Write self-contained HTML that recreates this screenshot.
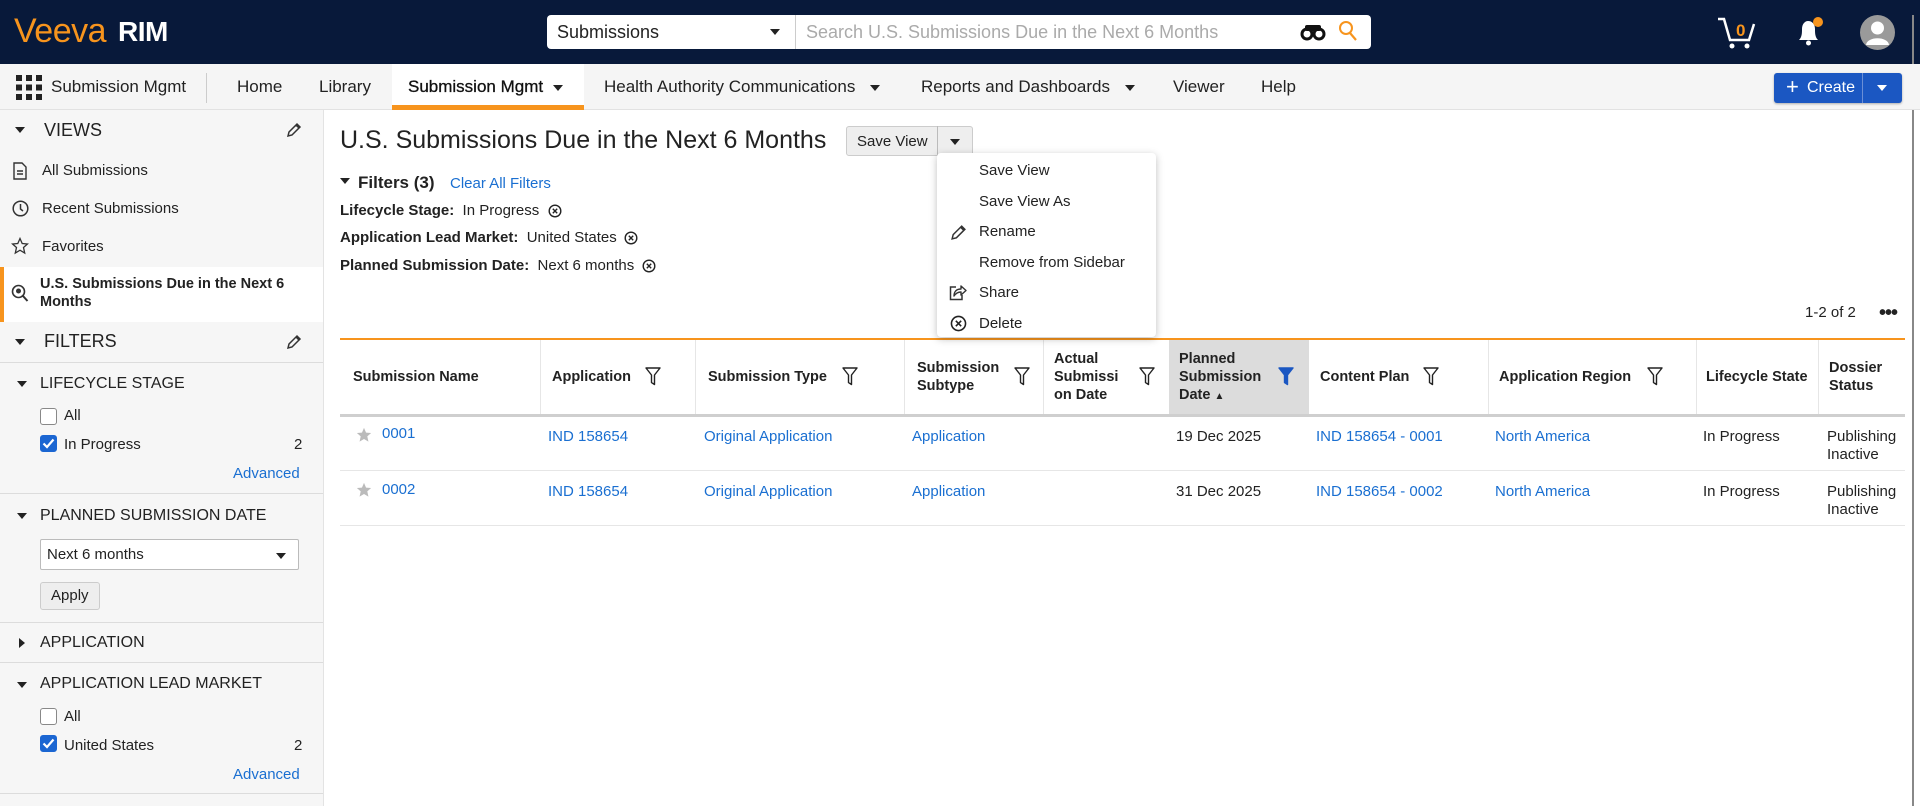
<!DOCTYPE html>
<html><head><meta charset="utf-8"><style>
*{box-sizing:border-box;margin:0;padding:0}
body{width:1920px;height:806px;overflow:hidden;font-family:"Liberation Sans",Arial,sans-serif;color:#222;background:#fff;position:relative}
.a{position:absolute;white-space:nowrap}
.top{position:absolute;left:0;top:0;width:1920px;height:64px;background:#08193a}
.nav{position:absolute;left:0;top:64px;width:1920px;height:46px;background:#f5f5f5;border-bottom:1px solid #e2e2e2}
.side{position:absolute;left:0;top:110px;width:324px;height:696px;background:#f6f6f6;border-right:1px solid #e3e3e3}
.blue{color:#1a6fd1}
.sb{font-size:15px}
.hr{position:absolute;left:0;width:323px;height:1px;background:#dcdcdc}
.cb{position:absolute;width:17px;height:17px;border:1px solid #888;border-radius:3px;background:#fff}
.cbon{background:#1b66d2;border-color:#1b66d2}
.caret{display:block;width:0;height:0;border-left:5px solid transparent;border-right:5px solid transparent;border-top:6px solid #222}
.th{position:absolute;font-size:14.5px;font-weight:bold;line-height:18px;color:#222}
.td{position:absolute;font-size:15px;line-height:18px}
.vd{position:absolute;top:340px;width:1px;height:74px;background:#e6e6e6}
</style></head><body>
<div class="top"></div>
<div class="a" style="left:14px;top:12px;font-size:34px;color:#f7941d;letter-spacing:-0.5px">Veeva</div>
<div class="a" style="left:118px;top:16px;font-size:28px;color:#fff;font-weight:bold;letter-spacing:-0.5px">RIM</div>
<div class="a" style="left:547px;top:15px;width:824px;height:34px;background:#fff;border-radius:4px"></div>
<div class="a" style="left:795px;top:15px;width:1px;height:34px;background:#ccc"></div>
<div class="a" style="left:557px;top:22px;font-size:18px;color:#222">Submissions</div>
<div class="a" style="left:770px;top:29px"><span class="caret"></span></div>
<div class="a" style="left:806px;top:22px;font-size:18px;color:#aaa">Search U.S. Submissions Due in the Next 6 Months</div>
<svg class="a" style="left:1300px;top:23px" width="26" height="18" viewBox="0 0 26 18"><circle cx="7" cy="11" r="5" fill="none" stroke="#111" stroke-width="3"/><circle cx="19" cy="11" r="5" fill="none" stroke="#111" stroke-width="3"/><rect x="5" y="2" width="16" height="6" rx="2" fill="#111"/></svg>
<svg class="a" style="left:1338px;top:20px" width="20" height="22" viewBox="0 0 20 22"><circle cx="8" cy="8" r="6" fill="none" stroke="#f7941d" stroke-width="2"/><line x1="12" y1="13" x2="18" y2="20" stroke="#f7941d" stroke-width="2.2"/></svg>
<svg class="a" style="left:1716px;top:16px" width="42" height="34" viewBox="0 0 42 34"><path d="M2 3 H8 L14 24 H33 L38 8" fill="none" stroke="#fff" stroke-width="2.5"/><circle cx="16" cy="30" r="2.5" fill="#fff"/><circle cx="31" cy="30" r="2.5" fill="#fff"/><text x="20" y="20" font-family="Liberation Sans" font-size="17" font-weight="bold" fill="#f7941d">0</text></svg>
<svg class="a" style="left:1794px;top:16px" width="32" height="32" viewBox="0 0 32 32"><path d="M5 24 C8 21 8 17 8 13 C8 8 11 5 14 5 C18 5 21 8 21 13 C21 17 21 21 24 24 Z" fill="#fff"/><circle cx="14.5" cy="27" r="2.5" fill="#fff"/><circle cx="24" cy="6" r="5" fill="#f7941d"/></svg>
<svg class="a" style="left:1860px;top:15px" width="35" height="35" viewBox="0 0 35 35"><circle cx="17.5" cy="17.5" r="17.5" fill="#9a9a9a"/><circle cx="17.5" cy="13" r="6.5" fill="#fff"/><path d="M6 30 C7 21 28 21 29 30 Z" fill="#fff"/></svg>
<div class="a" style="left:1912px;top:15px;width:2px;height:791px;background:#888"></div>

<div class="nav"></div>
<svg class="a" style="left:16px;top:75px" width="26" height="25" viewBox="0 0 26 25"><g fill="#222"><rect x="0" y="0" width="6" height="6"/><rect x="10" y="0" width="6" height="6"/><rect x="20" y="0" width="6" height="6"/><rect x="0" y="9.5" width="6" height="6"/><rect x="10" y="9.5" width="6" height="6"/><rect x="20" y="9.5" width="6" height="6"/><rect x="0" y="19" width="6" height="6"/><rect x="10" y="19" width="6" height="6"/><rect x="20" y="19" width="6" height="6"/></g></svg>
<div class="a" style="left:51px;top:77px;font-size:17px">Submission Mgmt</div>
<div class="a" style="left:206px;top:73px;width:1px;height:30px;background:#ccc"></div>
<div class="a" style="left:237px;top:77px;font-size:17px">Home</div>
<div class="a" style="left:319px;top:77px;font-size:17px">Library</div>
<div class="a" style="left:392px;top:64px;width:192px;height:46px;background:#fff;border-bottom:5px solid #f7941d"></div>
<div class="a" style="left:408px;top:77px;font-size:17px;color:#111;-webkit-text-stroke:0.3px #111">Submission Mgmt</div>
<div class="a" style="left:553px;top:85px"><span class="caret"></span></div>
<div class="a" style="left:604px;top:77px;font-size:17px">Health Authority Communications</div>
<div class="a" style="left:870px;top:85px"><span class="caret"></span></div>
<div class="a" style="left:921px;top:77px;font-size:17px">Reports and Dashboards</div>
<div class="a" style="left:1125px;top:85px"><span class="caret"></span></div>
<div class="a" style="left:1173px;top:77px;font-size:17px">Viewer</div>
<div class="a" style="left:1261px;top:77px;font-size:17px">Help</div>
<div class="a" style="left:1774px;top:73px;width:128px;height:30px;background:#1b57c2;border-radius:3px;box-shadow:0 1px 2px rgba(0,0,0,.3)"></div>
<div class="a" style="left:1862px;top:73px;width:1px;height:30px;background:#6b8fd6"></div>
<div class="a" style="left:1786px;top:75px;font-size:22px;color:#fff;line-height:24px">+</div>
<div class="a" style="left:1807px;top:79px;font-size:16px;color:#fff">Create</div>
<div class="a" style="left:1877px;top:85px"><span class="caret" style="border-top-color:#fff"></span></div>

<div class="side"></div>
<div class="a" style="left:15px;top:127px"><span class="caret"></span></div>
<div class="a" style="left:44px;top:120px;font-size:18px">VIEWS</div>
<svg class="a" style="left:286px;top:122px" width="16" height="16" viewBox="0 0 16 16"><path d="M2 14 L3 10 L11 2 L14 5 L6 13 Z M10 3 L13 6" fill="none" stroke="#333" stroke-width="1.5"/></svg>
<svg class="a" style="left:13px;top:162px" width="14" height="18" viewBox="0 0 14 18"><path d="M1 1 H9 L13 5 V17 H1 Z M4 9 H10 M4 12 H10" fill="none" stroke="#333" stroke-width="1.4"/></svg>
<div class="a sb" style="left:42px;top:162px">All Submissions</div>
<svg class="a" style="left:12px;top:200px" width="17" height="17" viewBox="0 0 17 17"><circle cx="8.5" cy="8.5" r="7.3" fill="none" stroke="#333" stroke-width="1.5"/><path d="M8.5 4 V9 L11 11" fill="none" stroke="#333" stroke-width="1.5"/></svg>
<div class="a sb" style="left:42px;top:200px">Recent Submissions</div>
<svg class="a" style="left:11px;top:237px" width="18" height="18" viewBox="0 0 18 18"><path d="M9 1.5 L11.2 6.5 L16.5 7 L12.5 10.5 L13.7 16 L9 13.2 L4.3 16 L5.5 10.5 L1.5 7 L6.8 6.5 Z" fill="none" stroke="#333" stroke-width="1.3"/></svg>
<div class="a sb" style="left:42px;top:238px">Favorites</div>
<div class="a" style="left:0;top:267px;width:323px;height:55px;background:#fff;border-left:4px solid #f7941d"></div>
<svg class="a" style="left:11px;top:284px" width="18" height="20" viewBox="0 0 18 20"><circle cx="7.5" cy="7.5" r="6" fill="none" stroke="#333" stroke-width="1.6"/><path d="M12 12 L16.5 17" stroke="#333" stroke-width="2"/><circle cx="7.5" cy="7" r="2.5" fill="#333"/></svg>
<div class="a" style="left:40px;top:275px;font-size:14.5px;font-weight:bold;line-height:18px">U.S. Submissions Due in the Next 6<br>Months</div>
<div class="a" style="left:15px;top:339px"><span class="caret"></span></div>
<div class="a" style="left:44px;top:331px;font-size:18px">FILTERS</div>
<svg class="a" style="left:286px;top:334px" width="16" height="16" viewBox="0 0 16 16"><path d="M2 14 L3 10 L11 2 L14 5 L6 13 Z M10 3 L13 6" fill="none" stroke="#333" stroke-width="1.5"/></svg>
<div class="hr" style="top:362px"></div>
<div class="a" style="left:17px;top:381px"><span class="caret"></span></div>
<div class="a" style="left:40px;top:375px;font-size:16px">LIFECYCLE STAGE</div>
<div class="cb" style="left:40px;top:408px"></div><div class="a sb" style="left:64px;top:407px">All</div>
<div class="cb cbon" style="left:40px;top:435px"></div>
<svg class="a" style="left:42px;top:438px" width="13" height="11" viewBox="0 0 13 11"><path d="M1.5 5.5 L5 9 L11.5 1.5" fill="none" stroke="#fff" stroke-width="2.2"/></svg>
<div class="a sb" style="left:64px;top:436px">In Progress</div><div class="a sb" style="left:294px;top:436px">2</div>
<div class="a sb blue" style="left:233px;top:465px">Advanced</div>
<div class="hr" style="top:493px"></div>
<div class="a" style="left:17px;top:513px"><span class="caret"></span></div>
<div class="a" style="left:40px;top:507px;font-size:16px">PLANNED SUBMISSION DATE</div>
<div class="a" style="left:40px;top:539px;width:259px;height:31px;background:#fff;border:1px solid #bbb;border-radius:2px"></div>
<div class="a sb" style="left:47px;top:546px">Next 6 months</div>
<div class="a" style="left:276px;top:553px"><span class="caret"></span></div>
<div class="a" style="left:40px;top:582px;width:60px;height:28px;background:#eee;border:1px solid #ccc;border-radius:3px"></div>
<div class="a sb" style="left:51px;top:587px">Apply</div>
<div class="hr" style="top:622px"></div>
<div class="a" style="left:19px;top:638px;width:0;height:0;border-top:5px solid transparent;border-bottom:5px solid transparent;border-left:6px solid #222"></div>
<div class="a" style="left:40px;top:634px;font-size:16px">APPLICATION</div>
<div class="hr" style="top:662px"></div>
<div class="a" style="left:17px;top:682px"><span class="caret"></span></div>
<div class="a" style="left:40px;top:675px;font-size:16px">APPLICATION LEAD MARKET</div>
<div class="cb" style="left:40px;top:708px"></div><div class="a sb" style="left:64px;top:708px">All</div>
<div class="cb cbon" style="left:40px;top:735px"></div>
<svg class="a" style="left:42px;top:738px" width="13" height="11" viewBox="0 0 13 11"><path d="M1.5 5.5 L5 9 L11.5 1.5" fill="none" stroke="#fff" stroke-width="2.2"/></svg>
<div class="a sb" style="left:64px;top:737px">United States</div><div class="a sb" style="left:294px;top:737px">2</div>
<div class="a sb blue" style="left:233px;top:766px">Advanced</div>
<div class="hr" style="top:793px"></div>

<div class="a" style="left:340px;top:126px;font-size:25px;color:#222">U.S. Submissions Due in the Next 6 Months</div>
<div class="a" style="left:846px;top:126px;width:127px;height:30px;background:#eee;border:1px solid #ccc;border-radius:3px"></div>
<div class="a" style="left:937px;top:126px;width:1px;height:30px;background:#bbb"></div>
<div class="a sb" style="left:857px;top:133px">Save View</div>
<div class="a" style="left:950px;top:139px"><span class="caret"></span></div>

<div class="a" style="left:340px;top:178px;width:0;height:0;border-left:5px solid transparent;border-right:5px solid transparent;border-top:6px solid #222"></div>
<div class="a" style="left:358px;top:173px;font-size:17px;font-weight:bold">Filters (3)</div>
<div class="a sb blue" style="left:450px;top:175px">Clear All Filters</div>
<div class="a sb" style="left:340px;top:202px"><b>Lifecycle Stage:</b>&nbsp; In Progress</div>
<div class="a sb" style="left:340px;top:229px"><b>Application Lead Market:</b>&nbsp; United States</div>
<div class="a sb" style="left:340px;top:257px"><b>Planned Submission Date:</b>&nbsp; Next 6 months</div>
<svg class="a" style="left:548px;top:204px" width="14" height="14" viewBox="0 0 14 14"><circle cx="7" cy="7" r="5.8" fill="none" stroke="#222" stroke-width="1.4"/><path d="M4.8 4.8 L9.2 9.2 M9.2 4.8 L4.8 9.2" stroke="#222" stroke-width="1.4"/></svg>
<svg class="a" style="left:624px;top:231px" width="14" height="14" viewBox="0 0 14 14"><circle cx="7" cy="7" r="5.8" fill="none" stroke="#222" stroke-width="1.4"/><path d="M4.8 4.8 L9.2 9.2 M9.2 4.8 L4.8 9.2" stroke="#222" stroke-width="1.4"/></svg>
<svg class="a" style="left:642px;top:259px" width="14" height="14" viewBox="0 0 14 14"><circle cx="7" cy="7" r="5.8" fill="none" stroke="#222" stroke-width="1.4"/><path d="M4.8 4.8 L9.2 9.2 M9.2 4.8 L4.8 9.2" stroke="#222" stroke-width="1.4"/></svg>

<div class="a sb" style="left:1805px;top:304px">1-2 of 2</div>
<div class="a" style="left:1879px;top:309px;font-size:20px;line-height:8px;font-weight:bold;letter-spacing:-1px">•••</div>

<div class="a" style="left:340px;top:338px;width:1565px;height:2px;background:#f7941d"></div>
<div class="a" style="left:1169px;top:340px;width:140px;height:74px;background:#dcdcdc"></div>
<div class="a" style="left:340px;top:414px;width:1565px;height:3px;background:#cfcfcf"></div>
<div class="vd" style="left:540px"></div><div class="vd" style="left:695px"></div><div class="vd" style="left:904px"></div><div class="vd" style="left:1043px"></div><div class="vd" style="left:1488px"></div><div class="vd" style="left:1696px"></div><div class="vd" style="left:1818px"></div>
<div class="th" style="left:353px;top:368px">Submission Name</div>
<div class="th" style="left:552px;top:368px">Application</div>
<div class="th" style="left:708px;top:368px">Submission Type</div>
<div class="th" style="left:917px;top:359px">Submission<br>Subtype</div>
<div class="th" style="left:1054px;top:350px">Actual<br>Submissi<br>on Date</div>
<div class="th" style="left:1179px;top:350px">Planned<br>Submission<br>Date <span style="font-size:10px">▲</span></div>
<div class="th" style="left:1320px;top:368px">Content Plan</div>
<div class="th" style="left:1499px;top:368px">Application Region</div>
<div class="th" style="left:1706px;top:368px">Lifecycle State</div>
<div class="th" style="left:1829px;top:359px">Dossier<br>Status</div>
<svg class="a" style="left:645px;top:367px" width="16" height="19" viewBox="0 0 16 19"><path d="M1 1 H15 L9.5 8 V17.5 L6.5 15.5 V8 Z" fill="none" stroke="#222" stroke-width="1.4" stroke-linejoin="round"/></svg>
<svg class="a" style="left:842px;top:367px" width="16" height="19" viewBox="0 0 16 19"><path d="M1 1 H15 L9.5 8 V17.5 L6.5 15.5 V8 Z" fill="none" stroke="#222" stroke-width="1.4" stroke-linejoin="round"/></svg>
<svg class="a" style="left:1014px;top:367px" width="16" height="19" viewBox="0 0 16 19"><path d="M1 1 H15 L9.5 8 V17.5 L6.5 15.5 V8 Z" fill="none" stroke="#222" stroke-width="1.4" stroke-linejoin="round"/></svg>
<svg class="a" style="left:1139px;top:367px" width="16" height="19" viewBox="0 0 16 19"><path d="M1 1 H15 L9.5 8 V17.5 L6.5 15.5 V8 Z" fill="none" stroke="#222" stroke-width="1.4" stroke-linejoin="round"/></svg>
<svg class="a" style="left:1278px;top:367px" width="16" height="19" viewBox="0 0 16 19"><path d="M1 1 H15 L9.5 8 V17.5 L6.5 15.5 V8 Z" fill="#1b57c2" stroke="#1b57c2" stroke-width="1.4" stroke-linejoin="round"/></svg>
<svg class="a" style="left:1423px;top:367px" width="16" height="19" viewBox="0 0 16 19"><path d="M1 1 H15 L9.5 8 V17.5 L6.5 15.5 V8 Z" fill="none" stroke="#222" stroke-width="1.4" stroke-linejoin="round"/></svg>
<svg class="a" style="left:1647px;top:367px" width="16" height="19" viewBox="0 0 16 19"><path d="M1 1 H15 L9.5 8 V17.5 L6.5 15.5 V8 Z" fill="none" stroke="#222" stroke-width="1.4" stroke-linejoin="round"/></svg>

<svg class="a" style="left:356px;top:427px" width="16" height="16" viewBox="0 0 18 18"><path d="M9 1 L11.3 6.3 L17 6.8 L12.7 10.6 L14 16.5 L9 13.5 L4 16.5 L5.3 10.6 L1 6.8 L6.7 6.3 Z" fill="#bbb"/></svg>
<div class="td blue" style="left:382px;top:425px">0001</div>
<div class="td blue" style="left:548px;top:428px">IND 158654</div>
<div class="td blue" style="left:704px;top:428px">Original Application</div>
<div class="td blue" style="left:912px;top:428px">Application</div>
<div class="td" style="left:1176px;top:428px">19 Dec 2025</div>
<div class="td blue" style="left:1316px;top:428px">IND 158654 - 0001</div>
<div class="td blue" style="left:1495px;top:428px">North America</div>
<div class="td" style="left:1703px;top:428px">In Progress</div>
<div class="td" style="left:1827px;top:428px">Publishing<br>Inactive</div>
<div class="a" style="left:340px;top:470px;width:1565px;height:1px;background:#e6e6e6"></div>
<svg class="a" style="left:356px;top:482px" width="16" height="16" viewBox="0 0 18 18"><path d="M9 1 L11.3 6.3 L17 6.8 L12.7 10.6 L14 16.5 L9 13.5 L4 16.5 L5.3 10.6 L1 6.8 L6.7 6.3 Z" fill="#bbb"/></svg>
<div class="td blue" style="left:382px;top:481px">0002</div>
<div class="td blue" style="left:548px;top:483px">IND 158654</div>
<div class="td blue" style="left:704px;top:483px">Original Application</div>
<div class="td blue" style="left:912px;top:483px">Application</div>
<div class="td" style="left:1176px;top:483px">31 Dec 2025</div>
<div class="td blue" style="left:1316px;top:483px">IND 158654 - 0002</div>
<div class="td blue" style="left:1495px;top:483px">North America</div>
<div class="td" style="left:1703px;top:483px">In Progress</div>
<div class="td" style="left:1827px;top:483px">Publishing<br>Inactive</div>
<div class="a" style="left:340px;top:525px;width:1565px;height:1px;background:#e6e6e6"></div>

<div class="a" style="left:937px;top:153px;width:219px;height:184px;background:#fff;border-radius:4px;box-shadow:0 2px 8px rgba(0,0,0,.25)"></div>
<div class="a sb" style="left:979px;top:162px">Save View</div>
<div class="a sb" style="left:979px;top:193px">Save View As</div>
<svg class="a" style="left:950px;top:224px" width="17" height="17" viewBox="0 0 16 16"><path d="M2 14 L3 10 L11 2 L14 5 L6 13 Z M10 3 L13 6" fill="none" stroke="#333" stroke-width="1.4"/></svg>
<div class="a sb" style="left:979px;top:223px">Rename</div>
<div class="a sb" style="left:979px;top:254px">Remove from Sidebar</div>
<svg class="a" style="left:949px;top:284px" width="18" height="17" viewBox="0 0 18 17"><path d="M7 3 H1.5 V15.5 H13 V11" fill="none" stroke="#333" stroke-width="1.5"/><path d="M5 12 C5 7 8 5 12 5 V2 L17 6.5 L12 11 V8 C9 8 7 9 5 12 Z" fill="none" stroke="#333" stroke-width="1.4" stroke-linejoin="round"/></svg>
<div class="a sb" style="left:979px;top:284px">Share</div>
<svg class="a" style="left:950px;top:315px" width="17" height="17" viewBox="0 0 14 14"><circle cx="7" cy="7" r="5.8" fill="none" stroke="#222" stroke-width="1.3"/><path d="M4.8 4.8 L9.2 9.2 M9.2 4.8 L4.8 9.2" stroke="#222" stroke-width="1.3"/></svg>
<div class="a sb" style="left:979px;top:315px">Delete</div>
</body></html>
